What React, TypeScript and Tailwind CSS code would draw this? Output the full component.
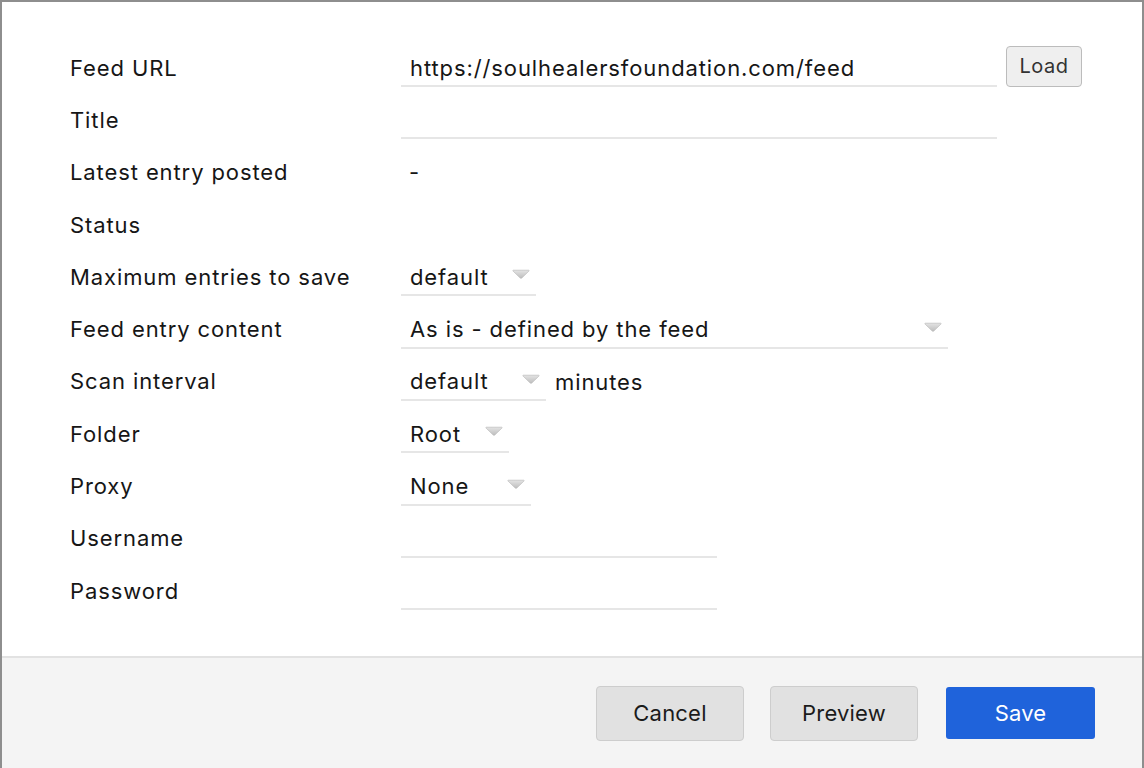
import React from "react";

const font = { fontFamily: 'Inter, "Noto Sans", "Liberation Sans", sans-serif' };

function Arrow() {
  return (
    <svg width="18" height="10" viewBox="0 0 18 10" className="shrink-0">
      <defs>
        <linearGradient id="arr" x1="0" y1="0" x2="0" y2="1">
          <stop offset="0" stopColor="#e4e4e4" />
          <stop offset="1" stopColor="#bdbdbd" />
        </linearGradient>
      </defs>
      <path d="M1.5 1.2 H16.5 Q17.6 1.2 16.9 2.1 L9.8 9 Q9 9.7 8.2 9 L1.1 2.1 Q0.4 1.2 1.5 1.2 Z" fill="url(#arr)" stroke="#b3b3b3" strokeWidth="0.6" />
    </svg>
  );
}

function Select({ value, width }: { value: string; width: string }) {
  return (
    <div className={`flex items-center justify-between h-[38px] border-b-2 border-[#e6e6e6] pl-[9px] pr-[6px] ${width}`}>
      <span className="pt-[2px]">{value}</span>
      <span className="-mt-[4px]">
        <Arrow />
      </span>
    </div>
  );
}

function Field({ value, width }: { value?: string; width: string }) {
  return (
    <div className={`flex items-center h-[38px] border-b-2 border-[#e6e6e6] pl-[9px] ${width}`}>
      <span className="pt-[2px]">{value}</span>
    </div>
  );
}

function Row({ label, children }: { label: string; children?: React.ReactNode }) {
  return (
    <div className="flex items-center h-[52.3px]">
      <div className="w-[331px] shrink-0">{label}</div>
      <div className="flex items-center flex-1">{children}</div>
    </div>
  );
}

export default function App() {
  return (
    <div
      style={font}
      className="w-[1144px] h-[768px] border-2 border-b-0 border-[#8e8e8e] bg-white flex flex-col text-[22px] tracking-[0.9px] text-[#161616] overflow-hidden"
    >
      <div className="flex-1 pl-[68px] pt-[40px]">
        <Row label="Feed URL">
          <Field value="https://soulhealersfoundation.com/feed" width="w-[596px]" />
          <button className="ml-[9px] -mt-[4px] w-[76px] h-[41px] rounded-[4px] border border-[#bcbcbc] bg-[#efefef] text-[20px] tracking-[0.5px] text-[#333]">
            Load
          </button>
        </Row>
        <Row label="Title">
          <Field width="w-[596px]" />
        </Row>
        <Row label="Latest entry posted">
          <span className="pl-[8px]">-</span>
        </Row>
        <Row label="Status" />
        <Row label="Maximum entries to save">
          <Select value="default" width="w-[135px]" />
        </Row>
        <Row label="Feed entry content">
          <Select value="As is - defined by the feed" width="w-[547px]" />
        </Row>
        <Row label="Scan interval">
          <Select value="default" width="w-[145px]" />
          <span className="ml-[9px] pt-[2px]">minutes</span>
        </Row>
        <Row label="Folder">
          <Select value="Root" width="w-[108px]" />
        </Row>
        <Row label="Proxy">
          <Select value="None" width="w-[130px]" />
        </Row>
        <Row label="Username">
          <Field width="w-[316px]" />
        </Row>
        <Row label="Password">
          <Field width="w-[316px]" />
        </Row>
      </div>
      <div className="h-[112px] shrink-0 border-t-2 border-[#e2e2e2] bg-[#f4f4f4] flex items-center justify-end gap-[26px] pr-[47px] tracking-[0.2px]">
        <button className="w-[148px] h-[55px] rounded-[4px] border border-[#cdcdcd] bg-[#e1e1e1] text-[#1b1b1b]">
          Cancel
        </button>
        <button className="w-[148px] h-[55px] rounded-[4px] border border-[#cdcdcd] bg-[#e1e1e1] text-[#1b1b1b]">
          Preview
        </button>
        <button className="ml-[2px] w-[149px] h-[52px] rounded-[3px] bg-[#1f63db] text-white">
          Save
        </button>
      </div>
    </div>
  );
}
